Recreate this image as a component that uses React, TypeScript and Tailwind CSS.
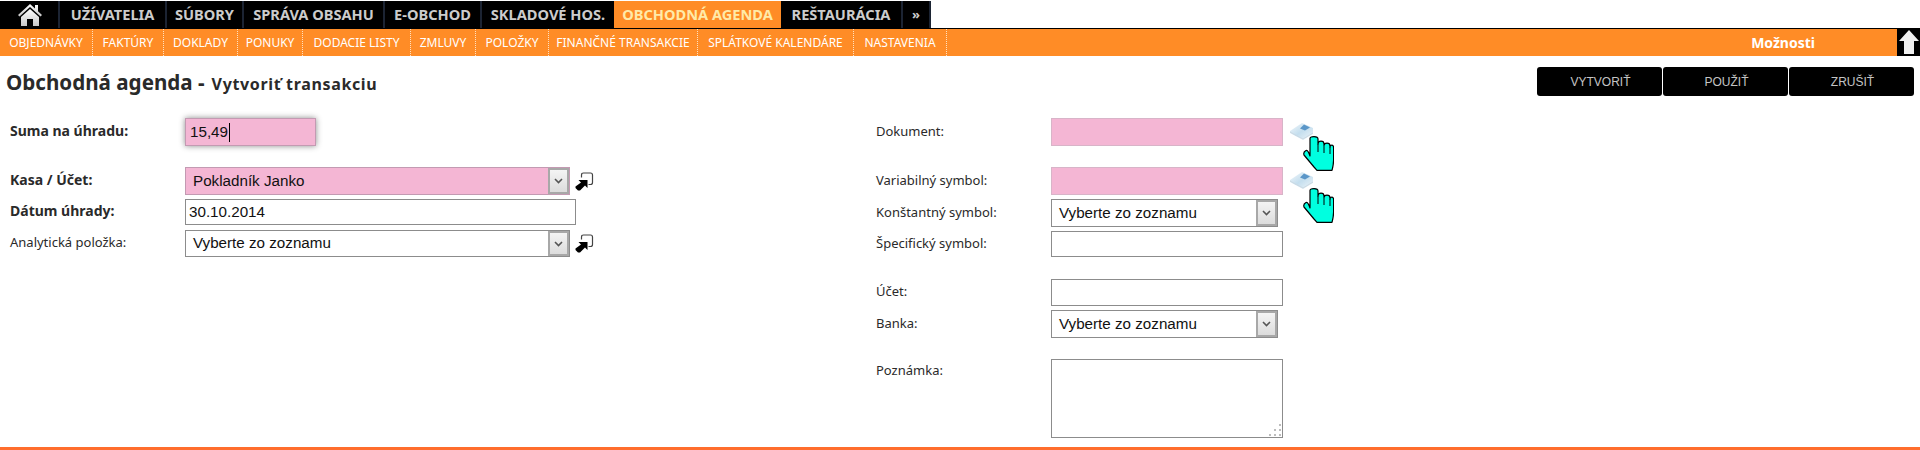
import React from "react";

const top = [
  { t: "UŽÍVATELIA", w: "w-[107px]" },
  { t: "SÚBORY", w: "w-[77px]" },
  { t: "SPRÁVA OBSAHU", w: "w-[141px]" },
  { t: "E-OBCHOD", w: "w-[97px]" },
  { t: "SKLADOVÉ HOS.", w: "w-[134px]" },
];
const sub = [
  { t: "OBJEDNÁVKY", w: "w-[93px]" },
  { t: "FAKTÚRY", w: "w-[71px]" },
  { t: "DOKLADY", w: "w-[74px]" },
  { t: "PONUKY", w: "w-[65px]" },
  { t: "DODACIE LISTY", w: "w-[108px]" },
  { t: "ZMLUVY", w: "w-[65px]" },
  { t: "POLOŽKY", w: "w-[73px]" },
  { t: "FINANČNÉ TRANSAKCIE", w: "w-[149px]" },
  { t: "SPLÁTKOVÉ KALENDÁRE", w: "w-[156px]" },
  { t: "NASTAVENIA", w: "w-[93px]" },
];

const Home = () => (
  <svg width="24" height="23" viewBox="0 0 24 23">
    <defs>
      <linearGradient id="hg" x1="0" y1="0" x2="0" y2="1">
        <stop offset="0" stopColor="#ffffff" />
        <stop offset="1" stopColor="#c8c8c8" />
      </linearGradient>
    </defs>
    <path d="M12 1 L17 5.5 V2 H20 V8.3 L24 12 L22.5 13.5 L12 4 L1.5 13.5 L0 12 Z" fill="url(#hg)" />
    <path d="M12 6 L21 14 V23 H15 V16 H9 V23 H3 V14 Z" fill="url(#hg)" />
  </svg>
);

const UpArrow = () => (
  <svg width="20" height="24" viewBox="0 0 20 24">
    <path d="M10 0 L20 11 H15 V24 H5 V11 H0 Z" fill="#f0f0f0" />
  </svg>
);

const Popup = () => (
  <svg width="19" height="19" viewBox="0 0 19 19" className="shrink-0">
    <path d="M6.5 5.5 V3 Q6.5 1 8.5 1 H15.5 Q17.5 1 17.5 3 V10.5 Q17.5 12.5 15.5 12.5 H13.5" fill="none" stroke="#444" strokeWidth="1.2" />
    <path d="M3.5 8 H12.5 V16 L10 13.5 L5 18.5 H3 L0.5 16 V14.5 L6 10.5 Z" fill="#000" />
  </svg>
);

const Chevron = () => (
  <div className="flex h-full w-[21px] shrink-0 items-center justify-center border-2 border-[#a8a8a8] bg-gradient-to-b from-[#f4f4f4] to-[#dcdcdc]">
    <svg width="9" height="6" viewBox="0 0 9 6">
      <path d="M1 1 L4.5 4.5 L8 1" fill="none" stroke="#555" strokeWidth="1.6" />
    </svg>
  </div>
);

const Book = () => (
  <svg width="24" height="19" viewBox="0 0 24 19" className="block">
    <defs>
      <linearGradient id="bk" x1="0" y1="0" x2="1" y2="1">
        <stop offset="0" stopColor="#f4f8fb" />
        <stop offset="0.5" stopColor="#c4deee" />
        <stop offset="1" stopColor="#eef5f9" />
      </linearGradient>
    </defs>
    <path d="M0 9 L12 1 L23 6 L23 12 L13 18 L0 11 Z" fill="url(#bk)" />
    <path d="M10 6.5 L14 2.5 L20 5.5 L15 8.5 Z" fill="#5a96c8" />
    <path d="M0 10 L13 17 L23 11" fill="none" stroke="#ccd9e2" strokeWidth="1" />
  </svg>
);

const Hand = () => (
  <svg width="31" height="35" viewBox="0 0 31 35" className="block">
    <path
      d="M7 20 V2.5 Q7 0.6 11 0.6 Q15 0.6 15 3 V8 Q15 5.2 18 5.2 Q21 5.2 21 8 V9.5 Q21 7.2 24 7.2 Q27 7.2 27 10 V11 Q27 9.2 29 9.2 Q30.6 9.2 30.6 12 V24 Q30.6 28 29 34.4 H14 L11 31 Q6 25 1 19 Q0 16 3 14.5 Q5 14 7 20 Z"
      fill="#00ffe0"
      stroke="#000"
      strokeWidth="1.2"
      strokeLinejoin="round"
    />
    <path d="M15 8 V16 M21 10 V17 M27 11 V18" stroke="#000" strokeWidth="1" fill="none" />
  </svg>
);

const labelBase = "font-['Noto_Sans',sans-serif] leading-none text-[#2a2a2a]";
const fieldFont = "font-['Liberation_Sans',sans-serif] text-[15.2px] text-[#111]";

function Row({ label, bold, mt, h, children, lw }: { label: string; bold?: boolean; mt: string; h: string; children: React.ReactNode; lw: string }) {
  return (
    <div className={`flex items-center ${mt} ${h}`}>
      <div className={`${lw} shrink-0 ${labelBase} ${bold ? "text-[14px] font-bold" : "text-[13px]"} -translate-y-px`}>{label}</div>
      {children}
    </div>
  );
}

const Sel = ({ text, w, pink }: { text: string; w: string; pink?: boolean }) => (
  <div className={`flex h-full items-center justify-between border ${pink ? "border-[#c39ab2] bg-[#f4b6d4]" : "border-[#8c8c8c] bg-white"} ${w}`}>
    <span className={`pl-[7px] ${fieldFont}`}>{text}</span>
    <Chevron />
  </div>
);

const Inp = ({ value, w, pink }: { value?: string; w: string; pink?: boolean }) => (
  <div className={`flex h-full items-center border pl-[3px] ${pink ? "border-[#d8b4c8] bg-[#f4b6d4]" : "border-[#8c8c8c] bg-white"} ${w} ${fieldFont}`}>
    {value}
  </div>
);

export default function App() {
  return (
    <div className="flex h-[450px] w-[1920px] flex-col overflow-hidden border-b-[3px] border-[#ff6d2d] bg-white">
      <nav className="flex h-[28px] items-stretch pt-px font-['Noto_Sans',sans-serif] text-[14.6px] font-bold">
        <div className="flex w-[58px] items-center justify-center bg-black pl-[1px] pb-[1px]">
          <Home />
        </div>
        {top.map((i) => (
          <div key={i.t} className={`flex items-center justify-center border-l-2 border-[#1c2433] bg-black text-[#cccccc] ${i.w}`}>
            {i.t}
          </div>
        ))}
        <div className="flex w-[167px] items-center justify-center bg-[#ff8c26] text-[#ffeaa8]">OBCHODNÁ AGENDA</div>
        <div className="flex w-[120px] items-center justify-center bg-black text-[#cccccc]">REŠTAURÁCIA</div>
        <div className="flex w-[30px] items-center justify-center border-x-2 border-[#1c2433] bg-black text-[13px] text-[#cccccc]">»</div>
      </nav>
      <div className="flex h-[28px] items-stretch border-t border-black bg-[#ff8c26]">
        {sub.map((i) => (
          <div key={i.t} className={`flex items-center justify-center border-r border-dotted border-[#ffe0c0] font-['Noto_Sans',sans-serif] text-[12px] text-white ${i.w}`}>
            {i.t}
          </div>
        ))}
        <div className="flex flex-1 items-center justify-end pr-[82px] font-['Noto_Sans',sans-serif] text-[14px] font-bold text-white">Možnosti</div>
        <div className="flex w-[23px] items-end justify-center bg-black pb-[2px]">
          <UpArrow />
        </div>
      </div>
      <div className="flex h-[44px] items-start justify-between pt-[11px] pr-[6px]">
        <div className="flex items-baseline pl-[6px] font-['Noto_Sans',sans-serif] font-bold text-[#2a2a2a]">
          <span className="text-[20.6px]">Obchodná agenda -</span>
          <span className="ml-[7px] text-[16px] tracking-[0.65px]">Vytvoriť transakciu</span>
        </div>
        <div className="flex gap-px">
          {["VYTVORIŤ", "POUŽIŤ", "ZRUŠIŤ"].map((b) => (
            <div key={b} className="flex h-[29px] w-[125px] items-center justify-center rounded-[3px] bg-black pl-[2px] font-['Liberation_Sans',sans-serif] text-[12px] text-[#c4c4c4]">
              {b}
            </div>
          ))}
        </div>
      </div>
      <div className="flex flex-1">
        <div className="w-[876px] pl-[10px]">
          <Row label="Suma na úhradu:" bold lw="w-[175px]" mt="mt-[18px]" h="h-[28px]">
            <div className="flex h-full w-[131px] items-center border border-[#c39ab2] bg-[#f4b6d4] pl-[4px] shadow-[0_0_6px_rgba(0,0,0,0.45)]">
              <span className={fieldFont}>15,49</span>
              <span className="ml-px h-[19px] w-px bg-black" />
            </div>
          </Row>
          <Row label="Kasa / Účet:" bold lw="w-[175px]" mt="mt-[21px]" h="h-[28px]">
            <Sel text="Pokladník Janko" w="w-[385px]" pink />
            <div className="ml-[5px]"><Popup /></div>
          </Row>
          <Row label="Dátum úhrady:" bold lw="w-[175px]" mt="mt-[4px]" h="h-[26px]">
            <Inp value="30.10.2014" w="w-[391px]" />
          </Row>
          <Row label="Analytická položka:" lw="w-[175px]" mt="mt-[5px]" h="h-[27px]">
            <Sel text="Vyberte zo zoznamu" w="w-[385px]" />
            <div className="ml-[5px]"><Popup /></div>
          </Row>
        </div>
        <div className="flex-1">
          <Row label="Dokument:" lw="w-[175px]" mt="mt-[18px]" h="h-[28px]">
            <Inp w="w-[232px]" pink />
            <div className="relative ml-[7px] h-full pt-[4px]">
              <Book />
              <div className="absolute top-[18px] left-[13px]"><Hand /></div>
            </div>
          </Row>
          <Row label="Variabilný symbol:" lw="w-[175px]" mt="mt-[21px]" h="h-[28px]">
            <Inp w="w-[232px]" pink />
            <div className="relative ml-[7px] h-full pt-[4px]">
              <Book />
              <div className="absolute top-[21px] left-[13px]"><Hand /></div>
            </div>
          </Row>
          <Row label="Konštantný symbol:" lw="w-[175px]" mt="mt-[4px]" h="h-[28px]">
            <Sel text="Vyberte zo zoznamu" w="w-[227px]" />
          </Row>
          <Row label="Špecifický symbol:" lw="w-[175px]" mt="mt-[4px]" h="h-[26px]">
            <Inp w="w-[232px]" />
          </Row>
          <Row label="Účet:" lw="w-[175px]" mt="mt-[22px]" h="h-[27px]">
            <Inp w="w-[232px]" />
          </Row>
          <Row label="Banka:" lw="w-[175px]" mt="mt-[4px]" h="h-[28px]">
            <Sel text="Vyberte zo zoznamu" w="w-[227px]" />
          </Row>
          <div className="mt-[21px] flex h-[79px] items-start">
            <div className={`w-[175px] shrink-0 pt-[5px] text-[13px] ${labelBase}`}>Poznámka:</div>
            <div className="relative h-full w-[232px]">
              <textarea readOnly className="block h-full w-full resize-none border border-[#8c8c8c] bg-white outline-none" />
              <svg width="14" height="14" viewBox="0 0 14 14" className="absolute right-[1px] bottom-[1px]">
                <g fill="#bdbdbd">
                  <rect x="11" y="1" width="2" height="2" />
                  <rect x="6" y="6" width="2" height="2" />
                  <rect x="11" y="6" width="2" height="2" />
                  <rect x="1" y="11" width="2" height="2" />
                  <rect x="6" y="11" width="2" height="2" />
                  <rect x="11" y="11" width="2" height="2" />
                </g>
              </svg>
            </div>
          </div>
        </div>
      </div>
    </div>
  );
}
